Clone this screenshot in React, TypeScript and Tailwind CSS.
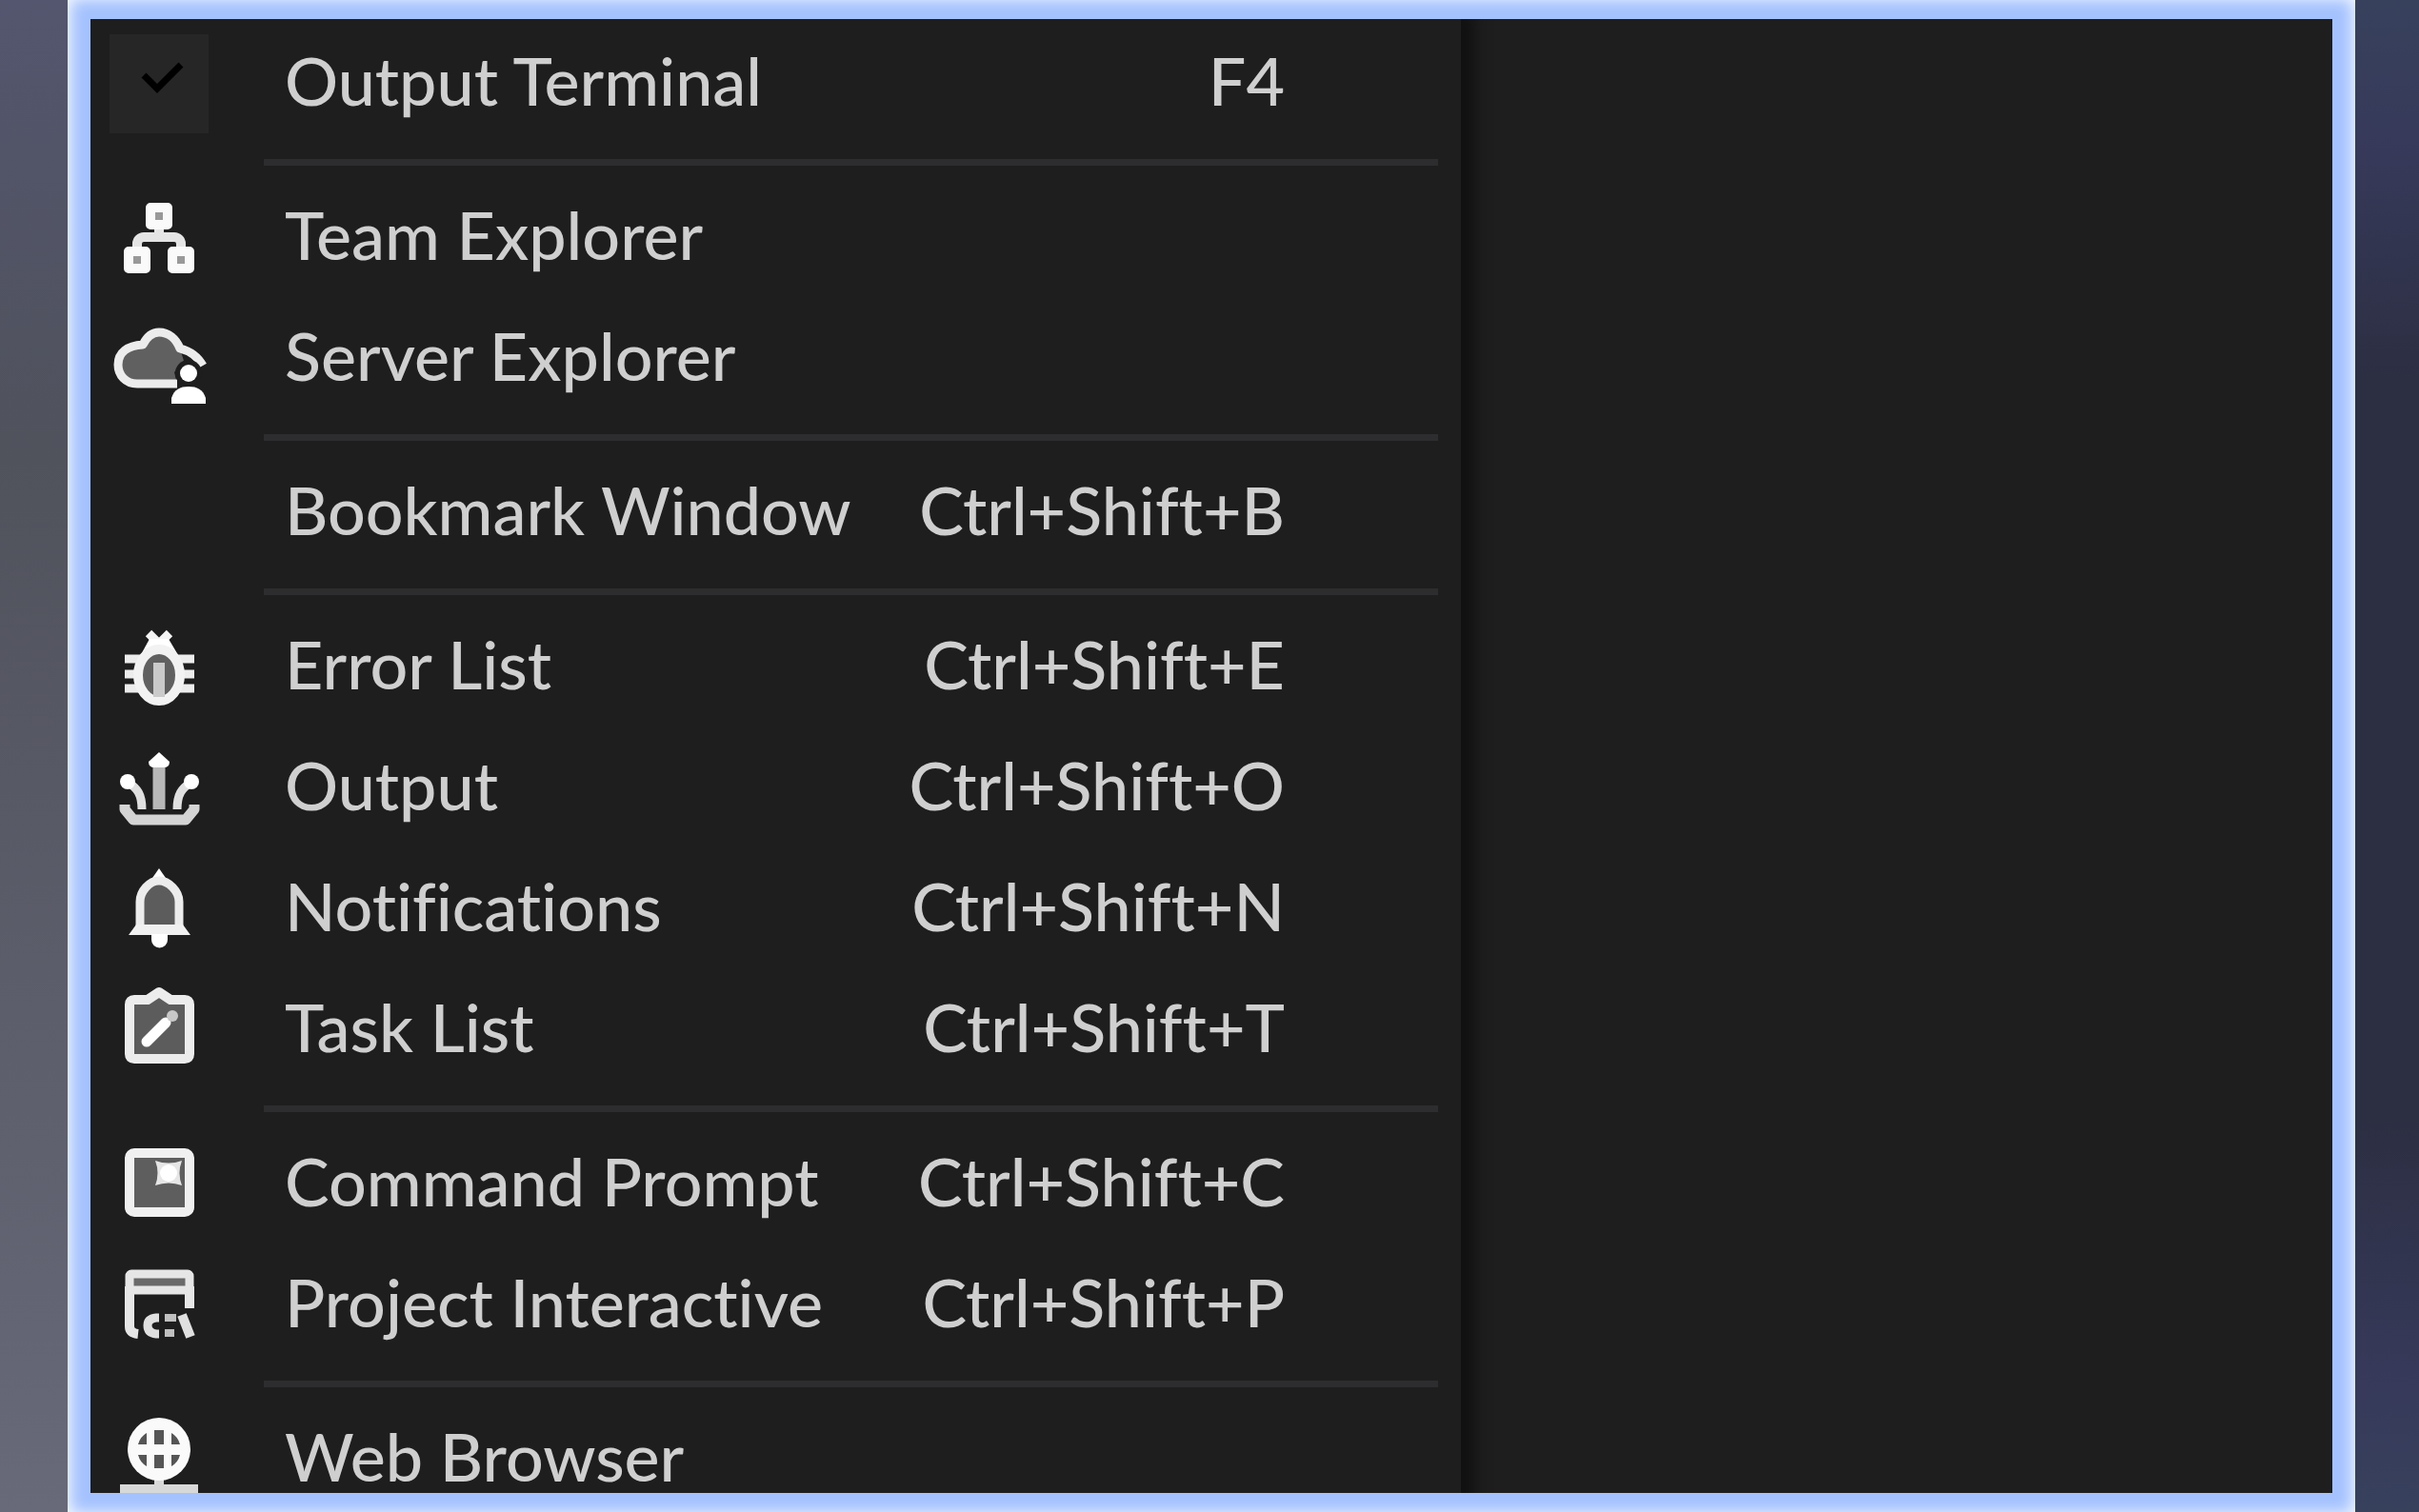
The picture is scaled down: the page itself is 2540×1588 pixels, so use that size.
import type { ReactNode } from "react"

interface MenuEntry {
  label: string
  shortcut?: string
  icon?: ReactNode
  checked?: boolean
}

function Icon({ children }: { children: ReactNode }) {
  return (
    <svg viewBox="0 0 100 100" className="size-[100px]" fill="none" strokeLinejoin="round" aria-hidden="true">
      {children}
    </svg>
  )
}

const CheckIcon = () => (
  <Icon>
    <path d="M34 41L48 55L73 30" stroke="#000" strokeWidth="7" strokeLinejoin="miter" />
  </Icon>
)

const TeamIcon = () => (
  <Icon>
    <path d="M27 62V56a7 7 0 0 1 7-7H66a7 7 0 0 1 7 7V62M50 38V50" stroke="#e4e4e4" strokeWidth="10" />
    <g fill="#999" stroke="#fafafa" strokeWidth="10">
      <rect x="41" y="18" width="18" height="18" />
      <rect x="18" y="64" width="18" height="18" />
      <rect x="64" y="64" width="18" height="18" />
    </g>
  </Icon>
)

const CloudIcon = () => (
  <Icon>
    <path
      d="M69 76H27C15 76 7 67 7 56C7 43 17 36 33 35C37 27 43 22 50 22C60 22 68 29 72 39L76 52L66 64Z"
      fill="#606060"
    />
    <path
      d="M69 76H27C15 76 7 67 7 56C7 43 17 36 33 35C37 27 43 22 50 22C60 22 68 29 72 39C84 42 91 48 96 57"
      stroke="#ececec"
      strokeWidth="9"
    />
    <circle cx="81" cy="65" r="14" fill="#1e1e1e" />
    <circle cx="81" cy="65" r="9" fill="#fff" />
    <path d="M63 97V91C66 82 72 79 81 79S96 82 99 91V97Z" fill="#fff" />
  </Icon>
)

const BugIcon = () => (
  <Icon>
    <path d="M14 41H34M14 57H30M14 72H34M66 41H87M70 57H87M66 72H87" stroke="#ececec" strokeWidth="9" />
    <path d="M39 14L50 25L61 14" stroke="#f4f4f4" strokeWidth="9" />
    <path d="M40 20H60L73 42H28Z" fill="#fff" />
    <ellipse cx="50" cy="58" rx="22" ry="27" fill="#606060" stroke="#f2f2f2" strokeWidth="10" />
    <path d="M50 45V81" stroke="#cacaca" strokeWidth="12" />
  </Icon>
)

const OutputIcon = () => (
  <Icon>
    <path d="M50 22V72" stroke="#b8b8b8" strokeWidth="13" />
    <path d="M50 12L61 22Q61 28 55 28H45Q39 28 39 22Z" fill="#fff" />
    <path d="M18 44C27 50 32 56 32 72M83 44C74 50 69 56 69 72" stroke="#e0e0e0" strokeWidth="9" />
    <circle cx="17" cy="43" r="8" fill="#fff" />
    <circle cx="84" cy="43" r="8" fill="#fff" />
    <path d="M14 67V72L23 83H78L87 72V67" stroke="#d4d4d4" strokeWidth="11" />
  </Icon>
)

const BellIcon = () => (
  <Icon>
    <path d="M50 7L59 20H41Z" fill="#fff" />
    <path d="M30 72V42C30 31 40 20 50 20S71 31 71 42V72Z" fill="#5c5c5c" stroke="#ececec" strokeWidth="9" />
    <path d="M26 66H75L83 77H18Z" fill="#f0f0f0" />
    <path d="M42 76H59V82a8 8 0 0 1-17 0Z" fill="#fff" />
  </Icon>
)

const TaskIcon = () => (
  <Icon>
    <path
      d="M24 18H38L50 10L62 18H77Q82 18 82 23V75Q82 80 77 80H24Q19 80 19 75V23Q19 18 24 18Z"
      fill="#5c5c5c"
      stroke="#ececec"
      strokeWidth="10"
    />
    <path d="M37 62L57 42" stroke="#fff" strokeWidth="11" strokeLinecap="round" />
    <circle cx="64" cy="35" r="6" fill="#c8c8c8" />
  </Icon>
)

const CommandIcon = () => (
  <Icon>
    <rect x="19" y="17" width="63" height="62" rx="5" fill="#5e5e5e" stroke="#f0f0f0" strokeWidth="10" />
    <path d="M46 25Q60 30 74 25Q69 38 74 51Q60 46 46 51Q51 38 46 25Z" fill="#e6e6e6" />
    <circle cx="60" cy="38" r="9" fill="#fff" />
  </Icon>
)

const InteractiveIcon = () => (
  <Icon>
    <rect x="19" y="17" width="63" height="17" rx="2" fill="#6a6a6a" stroke="#e6e6e6" strokeWidth="9" />
    <path d="M19 30V72Q19 79 28 80M82 30V53" stroke="#e6e6e6" strokeWidth="10" />
    <path d="M50 63H47Q38 64 38 71Q38 79 47 80H50" stroke="#e0e0e0" strokeWidth="9" />
    <path d="M56 63H68M56 79H66" stroke="#c0c0c0" strokeWidth="8" />
    <path d="M74 60L83 83" stroke="#e0e0e0" strokeWidth="10" />
  </Icon>
)

const GlobeIcon = () => (
  <Icon>
    <path d="M50 70V80" stroke="#d8d8d8" strokeWidth="10" />
    <path d="M9 82H91" stroke="#d8d8d8" strokeWidth="12" />
    <circle cx="50" cy="39" r="33" fill="#fafafa" />
    <path
      d="M45 19H55V34H45ZM45 45H55V59H45ZM37 22V34H28Q30 26 37 22ZM63 22V34H72Q70 26 63 22ZM37 57V45H28Q30 53 37 57ZM63 57V45H72Q70 53 63 57Z"
      fill="#555"
    />
  </Icon>
)

const groups: MenuEntry[][] = [
  [{ label: "Output Terminal", shortcut: "F4", icon: <CheckIcon />, checked: true }],
  [
    { label: "Team Explorer", icon: <TeamIcon /> },
    { label: "Server Explorer", icon: <CloudIcon /> },
  ],
  [{ label: "Bookmark Window", shortcut: "Ctrl+Shift+B" }],
  [
    { label: "Error List", shortcut: "Ctrl+Shift+E", icon: <BugIcon /> },
    { label: "Output", shortcut: "Ctrl+Shift+O", icon: <OutputIcon /> },
    { label: "Notifications", shortcut: "Ctrl+Shift+N", icon: <BellIcon /> },
    { label: "Task List", shortcut: "Ctrl+Shift+T", icon: <TaskIcon /> },
  ],
  [
    { label: "Command Prompt", shortcut: "Ctrl+Shift+C", icon: <CommandIcon /> },
    { label: "Project Interactive", shortcut: "Ctrl+Shift+P", icon: <InteractiveIcon /> },
  ],
  [{ label: "Web Browser", icon: <GlobeIcon /> }],
]

function MenuItem({ label, shortcut, icon, checked }: MenuEntry) {
  return (
    <button type="button" className="flex h-[127px] w-full items-center pl-5 pr-[185px] text-left">
      <span className={`flex size-[104px] shrink-0 items-center justify-center ${checked ? "bg-[#262626]" : ""}`}>
        {icon}
      </span>
      <span className="ml-[80px] flex grow justify-between pb-2 whitespace-nowrap">
        <span>{label}</span>
        {shortcut && <kbd className="font-[inherit]">{shortcut}</kbd>}
      </span>
    </button>
  )
}

export default function App() {
  return (
    <div className="flex h-screen overflow-hidden bg-[#52535f] font-[Lato,'Segoe_UI',sans-serif]">
      <div className="w-[71px] shrink-0 bg-linear-to-b from-[#53566e] via-[#50525c] via-30% to-[#686979]" />
      <main className="flex grow overflow-hidden bg-white px-6 py-5">
        <div className="flex grow overflow-hidden bg-[#1e1e1e] shadow-[0_0_16px_22px_#a4c2fe]">
          <nav
            aria-label="View"
            className="w-[1439px] shrink-0 self-start pt-1 text-[70px] leading-[80px] font-medium text-[#cfcfcf] shadow-[8px_0_14px_6px_#111111] [font-variant-ligatures:none]"
          >
            {groups.map((group, i) => (
              <div key={group[0].label}>
                {i > 0 && <hr className="ml-[182px] mr-6 mt-4 mb-3 h-[7px] border-0 bg-[#2d2d2f]" />}
                {group.map((item) => (
                  <MenuItem key={item.label} {...item} />
                ))}
              </div>
            ))}
          </nav>
        </div>
      </main>
      <div className="w-[67px] shrink-0 bg-[linear-gradient(#37415c,#373a5b_9%,#2c2f42_25%,#2c2f42_74%,#373a5b_92%,#37415c)]" />
    </div>
  )
}
